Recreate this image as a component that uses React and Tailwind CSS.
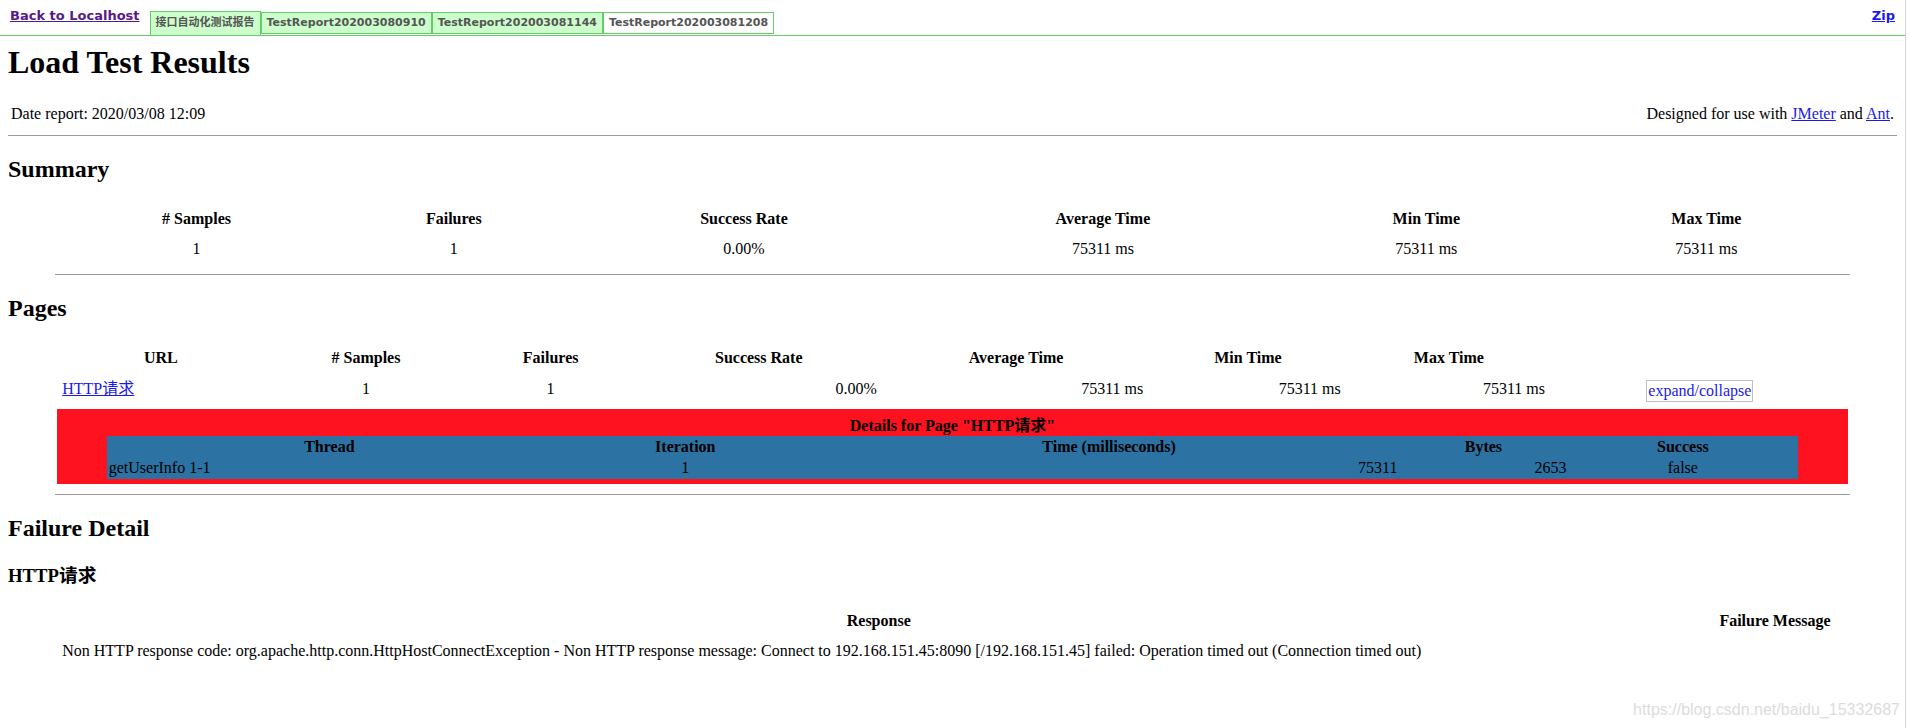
import React from 'react'

const serif = "font-['Liberation_Serif','Noto_Sans_CJK_SC',serif]"

const summaryHeads = ['# Samples', 'Failures', 'Success Rate', 'Average Time', 'Min Time', 'Max Time']
const summaryValues = ['1', '1', '0.00%', '75311 ms', '75311 ms', '75311 ms']

const pageHeads = ['URL', '# Samples', 'Failures', 'Success Rate', 'Average Time', 'Min Time', 'Max Time', '']

const tabs = [
  { label: '接口自动化测试报告', first: true },
  { label: 'TestReport202003080910' },
  { label: 'TestReport202003081144' },
  { label: 'TestReport202003081208', active: true },
]

function Header() {
  return (
    <div className="flex h-[36px] border-b border-[#6c6] px-[10px] font-['DejaVu_Sans','Noto_Sans_CJK_SC',sans-serif]">
      <a href="#" className="pt-[8px] text-[13px] font-bold leading-[15px] text-[#551a8b] underline">
        Back to Localhost
      </a>
      <div className="ml-[10px] mt-[11px] flex items-start">
        {tabs.map((t) =>
          t.first ? (
            <div
              key={t.label}
              className="flex h-[24px] items-center border border-b-0 border-[#6c6] bg-[#ccffcc] px-[5px] text-[11px] font-bold text-[#555]"
            >
              {t.label}
            </div>
          ) : (
            <div
              key={t.label}
              className={`mt-px flex h-[22px] items-center border border-[#6c6] px-[5px] text-[11px] font-bold text-[#555] ${t.active ? 'bg-white' : 'bg-[#ccffcc]'}`}
            >
              {t.label}
            </div>
          )
        )}
      </div>
      <a href="#" className="ml-auto pt-[8px] text-[13px] font-bold leading-[15px] text-[#1a1aee] underline">
        Zip
      </a>
    </div>
  )
}

function Rule({ narrow }) {
  return <div className={`my-2 border-t border-[#9a9a9a] ${narrow ? 'mx-auto w-[95%]' : ''}`} />
}

function ExpandBox() {
  return (
    <span className="inline-block border border-[#c0c0c0] px-px py-px leading-[18px] text-[#1a1aee]">
      expand/collapse
    </span>
  )
}

export default function App() {
  return (
    <div className={`relative min-h-[728px] w-full bg-white text-[16px] leading-[1.15] text-black ${serif}`}>
      <div className="min-h-[728px] w-[1906px] border-r border-[#d4d4d4]">
        <Header />

        <div className="mx-2">
          <h1 className="mb-[21.44px] mt-[8px] text-[32px] font-bold">Load Test Results</h1>

          <div className="flex justify-between p-[3px]">
            <span>Date report: 2020/03/08 12:09</span>
            <span>
              Designed for use with{' '}
              <a href="#" className="text-[#1a1aee] underline">JMeter</a> and{' '}
              <a href="#" className="text-[#1a1aee] underline">Ant</a>.
            </span>
          </div>
          <Rule />

          {/* Summary */}
          <h2 className="my-[19.92px] text-[24px] font-bold">Summary</h2>
          <table className="mx-auto w-[95%] border-separate border-spacing-[2px]">
            <tbody>
              <tr className="align-top">
                {summaryHeads.map((h) => (
                  <th key={h} className="p-[5px] text-center font-bold">{h}</th>
                ))}
              </tr>
              <tr className="align-top">
                {summaryValues.map((v, i) => (
                  <td key={i} className="p-[5px] text-center">{v}</td>
                ))}
              </tr>
            </tbody>
          </table>
          <Rule narrow />

          {/* Pages */}
          <h2 className="my-[19.92px] text-[24px] font-bold">Pages</h2>
          <table className="mx-auto w-[95%] border-separate border-spacing-[2px]">
            <tbody>
              <tr className="align-top">
                {pageHeads.map((h, i) => (
                  <th key={i} className="p-[5px] text-center font-bold">{h}</th>
                ))}
              </tr>
              <tr className="align-top">
                <td className="p-[5px] text-left">
                  <a href="#" className="text-[#1a1aee] underline">HTTP请求</a>
                </td>
                <td className="p-[5px] text-center">1</td>
                <td className="p-[5px] text-center">1</td>
                <td className="p-[5px] text-right">0.00%</td>
                <td className="p-[5px] text-right">75311 ms</td>
                <td className="p-[5px] text-right">75311 ms</td>
                <td className="p-[5px] text-right">75311 ms</td>
                <td className="p-[5px] text-center">
                  <ExpandBox />
                </td>
              </tr>
              <tr>
                <td colSpan={8} className="bg-[#fe1220] p-[5px]">
                  <div className="text-center">
                    <div className="pt-px leading-[21px]">
                      <b>Details for Page "HTTP请求"</b>
                    </div>
                    <table className="mx-auto w-[95%] border-separate border-spacing-[1px] bg-[#2c73a4]">
                      <tbody>
                        <tr>
                          <th className="p-px text-center font-bold">Thread</th>
                          <th className="p-px text-center font-bold">Iteration</th>
                          <th className="p-px text-center font-bold">Time (milliseconds)</th>
                          <th className="p-px text-center font-bold">Bytes</th>
                          <th className="p-px text-center font-bold">Success</th>
                        </tr>
                        <tr>
                          <td className="p-px text-left">getUserInfo 1-1</td>
                          <td className="p-px text-center">1</td>
                          <td className="p-px text-right">75311</td>
                          <td className="p-px text-right">2653</td>
                          <td className="p-px text-center">false</td>
                        </tr>
                      </tbody>
                    </table>
                  </div>
                </td>
              </tr>
            </tbody>
          </table>
          <Rule narrow />

          {/* Failure detail */}
          <h2 className="mb-[19.92px] mt-[20px] text-[24px] font-bold">Failure Detail</h2>
          <h3 className="mb-[18px] mt-[22px] text-[18.72px] font-bold">HTTP请求</h3>
          <table className="mx-auto w-[95%] border-separate border-spacing-[2px]">
            <tbody>
              <tr className="align-top">
                <th className="p-[5px] text-center font-bold">Response</th>
                <th className="p-[5px] text-center font-bold">Failure Message</th>
              </tr>
              <tr className="align-top">
                <td className="p-[5px] text-left">
                  Non HTTP response code: org.apache.http.conn.HttpHostConnectException - Non HTTP response message: Connect to 192.168.151.45:8090 [/192.168.151.45] failed: Operation timed out (Connection timed out)
                </td>
                <td className="p-[5px]"></td>
              </tr>
            </tbody>
          </table>
        </div>
      </div>

      {/* watermark */}
      <div className="absolute bottom-[9px] right-[10px] font-['Liberation_Sans',sans-serif] text-[16px] leading-[18px] text-[#dcdcdc]">
        https://blog.csdn.net/baidu_15332687
      </div>
    </div>
  )
}
